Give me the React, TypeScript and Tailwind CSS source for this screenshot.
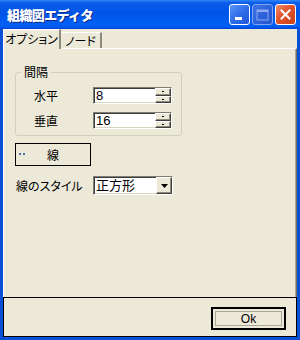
const jp = "font-['Noto_Sans_CJK_JP','Noto_Sans_CJK_SC',sans-serif]";
const palt = "[font-feature-settings:'palt']";

const sunken =
  'border border-t-[#7f7d72] border-l-[#7f7d72] border-b-white border-r-white shadow-[inset_1px_1px_0_#3c3c3c,inset_-1px_-1px_0_#d8d5c5] bg-white';
const raised =
  'bg-[#ece9d8] border border-t-white border-l-white border-b-[#404040] border-r-[#404040] shadow-[inset_-1px_-1px_0_#8e8b7d]';

const TitleButton = ({ kind }: { kind: 'min' | 'max' | 'close' }) => {
  if (kind === 'close') {
    return (
      <div className="w-[21px] h-[21px] rounded-[3px] border border-white bg-[linear-gradient(135deg,#f08b6a_0%,#e0522b_45%,#c9431f_100%)] flex items-center justify-center">
        <svg width="11" height="11" viewBox="0 0 11 11">
          <path d="M1.5 1.5 L9.5 9.5 M9.5 1.5 L1.5 9.5" stroke="white" strokeWidth="2" strokeLinecap="square" />
        </svg>
      </div>
    );
  }
  if (kind === 'max') {
    return (
      <div className="w-[21px] h-[21px] rounded-[3px] border border-[#7ea3ee] bg-[linear-gradient(135deg,#3f73e4_0%,#2b5fd9_60%,#2456cf_100%)] flex items-center justify-center">
        <svg width="13" height="12" viewBox="0 0 13 12">
          <rect x="1" y="1" width="11" height="10" fill="none" stroke="#8eaaf0" strokeWidth="1" />
          <rect x="1" y="1" width="11" height="2" fill="#8eaaf0" />
        </svg>
      </div>
    );
  }
  return (
    <div className="w-[21px] h-[21px] rounded-[3px] border border-white bg-[linear-gradient(135deg,#5b95f8_0%,#2c6ae8_55%,#1f56d8_100%)] flex items-end pl-[5px] pb-[4px]">
      <div className="w-[7px] h-[3px] bg-white" />
    </div>
  );
};

const Spinner = () => (
  <div className="flex flex-col w-[16px] h-full">
    {[0, 1].map((i) => (
      <div key={i} className={`${raised} flex-1 flex items-center justify-center`}>
        <div className="w-[2px] h-[1px] bg-black" />
      </div>
    ))}
  </div>
);

const NumberField = ({ value }: { value: string }) => (
  <div className={`${sunken} w-[79px] h-[17px] flex items-stretch`}>
    <span className="flex-1 pl-[2px] leading-[15px] font-['Liberation_Sans',sans-serif] text-[13px]">{value}</span>
    <Spinner />
  </div>
);

export default function App() {
  return (
    <div className={`w-[300px] h-[340px] bg-[#0a4fd6] flex flex-col overflow-hidden text-[12px] text-black ${jp}`}>
      <div className="h-[29px] shrink-0 flex items-center pl-[7px] pr-[4px] bg-[linear-gradient(to_bottom,#2f86f7_0%,#0a5cea_10%,#0055e8_45%,#0060f6_85%,#005bf0_92%,#0043d4_100%)]">
        <span className="font-black text-[13px] text-white tracking-[-0.6px] [text-shadow:1px_1px_#0b2a86]">組織図エディタ</span>
        <div className="ml-auto flex gap-[2px]">
          <TitleButton kind="min" />
          <TitleButton kind="max" />
          <TitleButton kind="close" />
        </div>
      </div>

      <div className="flex-1 mx-[3px] mb-[3px] bg-[#ece9d8] flex flex-col">
        <div className="h-[20px] -mb-px flex items-end relative z-10">
          <div className={`h-[20px] w-[58px] bg-[#ece9d8] border-l border-t border-white border-r-2 border-r-[#8d8a7e] flex justify-center pt-[1px] leading-[15px] ${palt}`}>
            オプション
          </div>
          <div className={`h-[16px] w-[41px] mb-px border-t border-white border-r-2 border-r-[#8d8a7e] flex justify-center leading-[15px] ${palt}`}>
            ノード
          </div>
        </div>

        <div className="h-[249px] border-l border-t border-white border-r border-r-[#716f64] shadow-[inset_-1px_0_0_#aca899] pl-[11px] pt-[16px] flex flex-col items-start">
          <fieldset className="w-[167px] border border-[#d0d0bf] rounded-[3px] pt-[8px] pb-[6px]">
            <legend className="ml-[5px] px-[3px] leading-[14px]">間隔</legend>
            <div className="pl-[18px] flex flex-col gap-[8px]">
              <div className="flex items-center">
                <span className="w-[59px] leading-[14px]">水平</span>
                <NumberField value="8" />
              </div>
              <div className="flex items-center">
                <span className="w-[59px] leading-[14px]">垂直</span>
                <NumberField value="16" />
              </div>
            </div>
          </fieldset>

          <div className="relative mt-[7px] w-[76px] h-[23px] border border-black flex items-center justify-center">
            <div className="absolute left-[3px] top-[9px] flex gap-[2px]">
              <div className="w-[2px] h-[2px] bg-[#4b6cb0]" />
              <div className="w-[2px] h-[2px] bg-[#4b6cb0]" />
            </div>
            <span className="leading-[14px]">線</span>
          </div>

          <div className="mt-[10px] flex items-center">
            <span className={`ml-[1px] w-[77px] leading-[14px] ${palt}`}>線のスタイル</span>
            <div className={`${sunken} w-[80px] h-[19px] flex items-stretch`}>
              <span className="flex-1 pl-[2px] leading-[16px] text-[13px]">正方形</span>
              <div className={`${raised} w-[16px] flex items-center justify-center`}>
                <svg width="7" height="4" viewBox="0 0 7 4">
                  <path d="M0 0 H7 L3.5 4 Z" fill="black" />
                </svg>
              </div>
            </div>
          </div>
        </div>

        <div className="flex-1 border border-black flex justify-end items-start pt-[9px] pr-[10px]">
          <div className="w-[75px] h-[23px] border-2 border-black p-[2px] flex">
            <div className="flex-1 border border-[#a8a8a0] flex items-center justify-center font-['Liberation_Sans',sans-serif] text-[12px] leading-[14px]">
              Ok
            </div>
          </div>
        </div>
      </div>
    </div>
  );
}
